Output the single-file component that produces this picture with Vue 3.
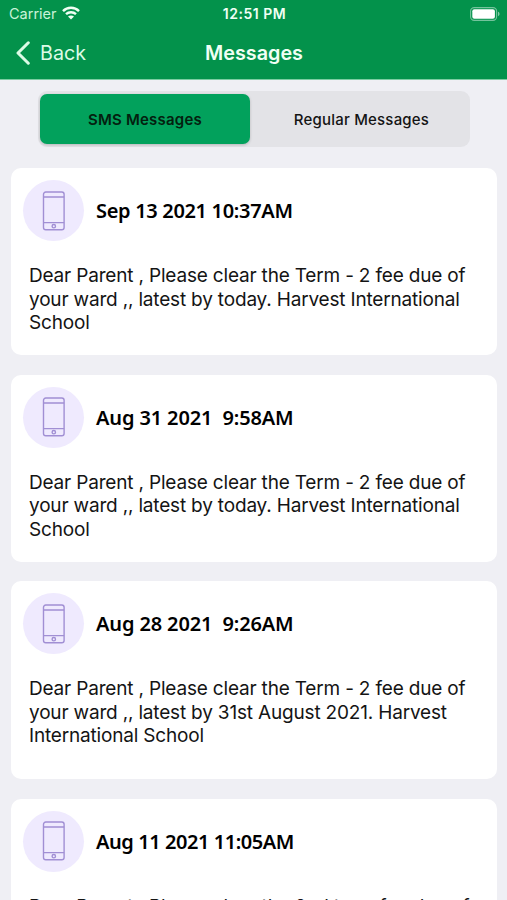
<script setup>
import { ref } from 'vue'

const tabs = ['SMS Messages', 'Regular Messages']
const active = ref(0)

const messages = [
  { date: 'Sep 13 2021 10:37AM', fit: 'snug', text: 'Dear Parent , Please clear the Term - 2 fee due of your ward ,, latest by today. Harvest International School' },
  { date: 'Aug 31 2021  9:58AM', text: 'Dear Parent , Please clear the Term - 2 fee due of your ward ,, latest by today. Harvest International School' },
  { date: 'Aug 28 2021  9:26AM', text: 'Dear Parent , Please clear the Term - 2 fee due of your ward ,, latest by 31st August 2021. Harvest International School', tall: true },
  { date: 'Aug 11 2021 11:05AM', fit: 'tight', text: 'Dear Parent , Please clear the 2nd term fee due of your ward ,, latest by today. Harvest International School' },
]
</script>

<template>
  <div class="screen">
    <header class="top">
      <div class="status">
        <div class="carrier">
          <span>Carrier</span>
          <svg class="wifi" viewBox="0 0 18 14" width="18" height="14">
            <path d="M1 5.1C5.4.6 12.6.6 17 5.1M4 8.2C6.8 5.5 11.2 5.5 14 8.2" fill="none" stroke="currentColor" stroke-width="2.4" />
            <path d="M6 10.5C7.7 9 10.3 9 12 10.5L9 13.6Z" fill="currentColor" />
          </svg>
        </div>
        <span class="time">12:51 PM</span>
        <svg class="battery" viewBox="0 0 30 14" width="30" height="14">
          <rect x=".6" y=".6" width="26" height="12.8" rx="3.6" fill="none" stroke="currentColor" stroke-opacity=".45" stroke-width="1.1" />
          <rect x="2.3" y="2.3" width="22.6" height="9.4" rx="2" fill="currentColor" />
          <path d="M28 4.8C30 5.4 30 8.6 28 9.2Z" fill="currentColor" fill-opacity=".5" />
        </svg>
      </div>
      <nav class="nav">
        <button class="back">
          <svg viewBox="0 0 14 24" width="14" height="24">
            <path d="M12.3 1.8L2 12L12.3 22.2" fill="none" stroke="currentColor" stroke-width="3" stroke-linecap="round" stroke-linejoin="round" />
          </svg>
          <span>Back</span>
        </button>
        <h1>Messages</h1>
        <span></span>
      </nav>
    </header>

    <div class="segments">
      <button v-for="(tab, i) in tabs" :key="tab" class="segment" :class="{ active: i === active }" @click="active = i">{{ tab }}</button>
    </div>

    <main class="list">
      <article v-for="m in messages" :key="m.date" class="card" :class="{ tall: m.tall }">
        <div class="head">
          <span class="badge">
            <svg viewBox="0 0 24 40" width="24" height="40">
              <g fill="none" stroke="#a18fd4" stroke-width="1.4">
                <rect x="1.5" y="1" width="20.6" height="37.8" rx="2.3" />
                <path d="M1.5 6H22.1M1.5 31.6H22.1" />
                <circle cx="11.8" cy="35.2" r="1.7" />
              </g>
            </svg>
          </span>
          <h2 :class="m.fit">{{ m.date }}</h2>
        </div>
        <p>{{ m.text }}</p>
      </article>
    </main>
  </div>
</template>

<style>
body {
  background: #efeff4;
}
</style>

<style scoped>
.screen {
  height: 900px;
  overflow: hidden;
  background: #efeff4;
  font-family: Inter, "Liberation Sans", sans-serif;
  color: #141414;
}
button {
  border: 0;
  padding: 0;
  background: none;
  font: inherit;
  color: inherit;
}
.top {
  box-sizing: border-box;
  height: 80px;
  background: #03924b;
  border-bottom: 1px solid #7ccda2;
  color: #f0fff4;
}
.status {
  display: grid;
  grid-template-columns: 1fr auto 1fr;
  align-items: center;
  height: 27px;
  padding: 0 7px 0 9px;
  font-size: 14.5px;
}
.carrier {
  display: flex;
  align-items: center;
  gap: 5px;
  color: #c9f3d8;
}
.wifi {
  color: #f0fff4;
  margin-top: -2px;
}
.time {
  font-size: 14px;
  font-weight: 600;
  letter-spacing: .5px;
}
.battery {
  justify-self: end;
  color: #fff;
}
.nav {
  display: grid;
  grid-template-columns: 1fr auto 1fr;
  align-items: center;
  height: 51px;
  padding: 0 15px 0 16px;
}
.back {
  display: flex;
  align-items: center;
  gap: 10px;
  font-size: 19.7px;
  color: #dcfbe6;
}
h1 {
  margin: 0;
  font-size: 19.8px;
  font-weight: 600;
}
.segments {
  box-sizing: border-box;
  display: flex;
  width: 432px;
  height: 56px;
  margin: 11px 0 0 38px;
  padding: 3px 2px;
  border-radius: 9px;
  background: #e3e3e7;
}
.segment {
  flex: 1;
  padding-left: 5px;
  font-size: 15px;
  font-weight: 500;
  letter-spacing: .2px;
}
.segment.active {
  flex: 0 0 210px;
  padding-left: 0;
  border-radius: 7px;
  background: #02a15c;
  box-shadow: 0 1px 3px rgba(0, 0, 0, .2);
  color: #04200f;
  font-weight: 600;
}
.list {
  display: flex;
  flex-direction: column;
  gap: 19.5px;
  padding: 21px 10px 0 11px;
}
.card {
  box-sizing: border-box;
  flex: none;
  height: 187px;
  padding: 12px 12px 0;
  border-radius: 10px;
  background: #fff;
}
.card.tall {
  height: 198px;
}
.head {
  display: flex;
  align-items: center;
  gap: 12px;
}
.badge {
  display: flex;
  align-items: center;
  justify-content: center;
  width: 61px;
  height: 61px;
  border-radius: 50%;
  background: #efeafe;
}
h2 {
  margin: 0;
  font-family: "Noto Sans", sans-serif;
  font-size: 20px;
  font-weight: 600;
  letter-spacing: -.13px;
  color: #000;
  white-space: pre;
}
h2.snug {
  letter-spacing: -.32px;
}
h2.tight {
  letter-spacing: -.44px;
}
p {
  margin: 23px 0 0 6px;
  width: 446px;
  font-size: 19px;
  line-height: 23.5px;
  letter-spacing: -.18px;
}
</style>
